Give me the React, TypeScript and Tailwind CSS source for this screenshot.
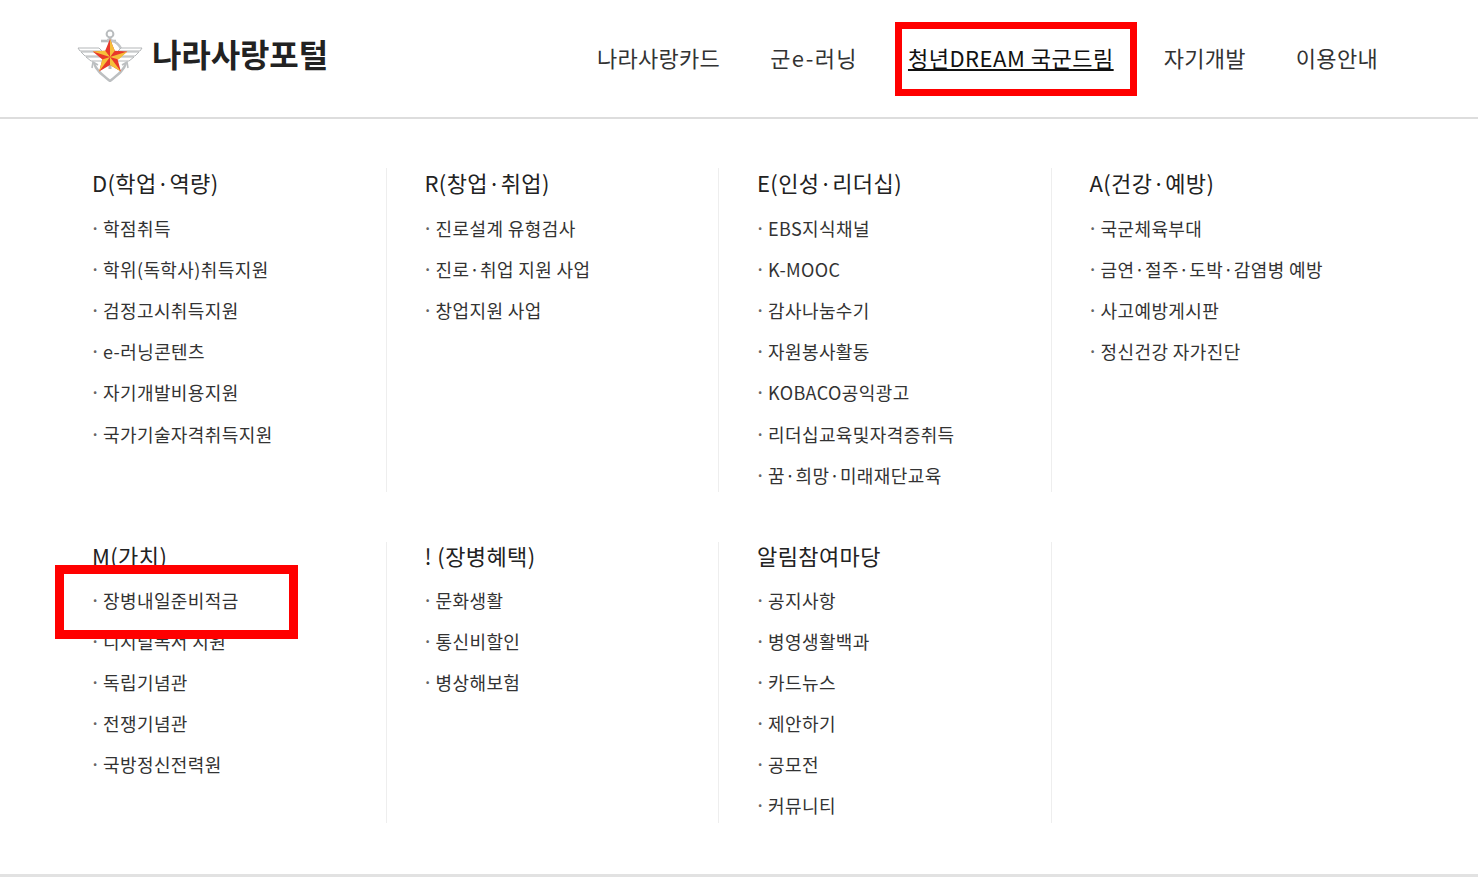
const nav = ['나라사랑카드', '군e-러닝', '청년DREAM 국군드림', '자기개발', '이용안내']

const topGroups = [
  {
    title: 'D(학업·역량)',
    items: ['학점취득', '학위(독학사)취득지원', '검정고시취득지원', 'e-러닝콘텐츠', '자기개발비용지원', '국가기술자격취득지원'],
  },
  { title: 'R(창업·취업)', items: ['진로설계 유형검사', '진로·취업 지원 사업', '창업지원 사업'] },
  {
    title: 'E(인성·리더십)',
    items: ['EBS지식채널', 'K-MOOC', '감사나눔수기', '자원봉사활동', 'KOBACO공익광고', '리더십교육및자격증취득', '꿈·희망·미래재단교육'],
  },
  { title: 'A(건강·예방)', items: ['국군체육부대', '금연·절주·도박·감염병 예방', '사고예방게시판', '정신건강 자가진단'] },
]

const bottomGroups = [
  { title: 'M(가치)', items: ['장병내일준비적금', '디지털독서 지원', '독립기념관', '전쟁기념관', '국방정신전력원'] },
  { title: '! (장병혜택)', items: ['문화생활', '통신비할인', '병상해보험'] },
  { title: '알림참여마당', items: ['공지사항', '병영생활백과', '카드뉴스', '제안하기', '공모전', '커뮤니티'] },
  { title: '', items: [] as string[] },
]

function Emblem() {
  return (
    <svg viewBox="0 0 66 54" className="w-[66px] h-[54px] shrink-0" fill="none">
      <circle cx="33" cy="6" r="3.4" stroke="#b9bcbe" strokeWidth="2" />
      <path d="M33 9v32" stroke="#b9bcbe" strokeWidth="3" />
      <path d="M24 13h15" stroke="#b9bcbe" strokeWidth="2.6" />
      <path d="M30 12c8 0 14 5 15 13" stroke="#c4c6c8" strokeWidth="2.4" />
      {/* wings */}
      <path d="M1 20h21l3 3H3z" fill="#fff" stroke="#b4b7b9" strokeWidth="1" />
      <path d="M65 20H44l-3 3h22z" fill="#fff" stroke="#b4b7b9" strokeWidth="1" />
      <path d="M4 24h20l2 4H8z" fill="#fff" stroke="#b4b7b9" strokeWidth="1" />
      <path d="M62 24H42l-2 4h18z" fill="#fff" stroke="#b4b7b9" strokeWidth="1" />
      <path d="M9 29h18l2 4H14z" fill="#fff" stroke="#b4b7b9" strokeWidth="1" />
      <path d="M57 29H39l-2 4h15z" fill="#fff" stroke="#b4b7b9" strokeWidth="1" />
      {/* anchor arms */}
      <path d="M17 35c2 8 10 13 16 18 6-5 14-10 16-18" stroke="#bcbfc1" strokeWidth="2.4" />
      <path d="M21 37l-5-3-1 6M45 37l5-3 1 6" stroke="#bcbfc1" strokeWidth="1.6" />
      {/* star */}
      <path d="M33 11l4.800 11.700 12.500.7-9.700 8 3.300 12.100L33 37l-10.900 6.500 3.300-12.100-9.700-8 12.500-.7z" fill="#e8382a" />
      <path d="M33 11v18l4.800-6.300zM50.300 23.400 33 29l8.600 2.400zM43.900 43.500 33 29v8zM22.100 43.500 33 29l-7.600 2.400zM15.700 23.400 33 29l-4.800-6.300z" fill="#f6bf3a" />
    </svg>
  )
}

function Group({ title, items, last, lower }: { title: string; items: string[]; last: boolean; lower?: boolean }) {
  return (
    <div className={`pl-[38px] ${last ? '' : 'border-r border-[#eeeeee]'}`}>
      <h3 className={`${lower ? '-mt-[3px]' : '-mt-[2px]'} text-[22px] leading-[32px] tracking-[0.4px] text-[#222222]`}>{title}</h3>
      <ul className={`${lower ? 'mt-[9px]' : 'mt-[10px]'} flex flex-col`}>
        {items.map(item => (
          <li key={item} className={`${lower ? 'h-[41px]' : 'h-[41.1px]'} flex items-center text-[18px] tracking-[0.4px] text-[#333333]`}>
            <span className="w-[11px] -ml-[1px] mr-[1px] text-[14px] font-bold text-[#666666]">·</span>
            {item}
          </li>
        ))}
      </ul>
    </div>
  )
}

export default function App() {
  return (
    <div className="relative w-[1478px] h-[877px] overflow-hidden bg-white font-['Noto_Sans_CJK_KR','Noto_Sans',sans-serif]">
      <header className="h-[119px] flex items-center border-b-2 border-[#dddddd] pl-[77px] pr-[100px]">
        <a className="flex items-center gap-[9px] -mt-[8px]">
          <Emblem />
          <span className="-mt-[3px] text-[32px] font-bold tracking-[-0.1px] text-[#222222]">나라사랑포털</span>
        </a>
        <nav className="ml-auto -mt-[2px] flex items-center gap-[50px] text-[22px] tracking-[0.3px] text-[#333333]">
          <a>{nav[0]}</a>
          <a className="tracking-[1.4px]">{nav[1]}</a>
          <a className="tracking-[0.5px] underline underline-offset-2 text-[#111111]">{nav[2]}</a>
          <a>{nav[3]}</a>
          <a>{nav[4]}</a>
        </nav>
      </header>

      <main className="pl-[54px] w-[1384px]">
        <section className="grid grid-cols-4 grid-rows-[324px] mt-[49px]">
          {topGroups.map((g, i) => (
            <Group key={g.title} title={g.title} items={g.items} last={i === 3} />
          ))}
        </section>
        <section className="grid grid-cols-4 grid-rows-[281px] mt-[50px]">
          {bottomGroups.map((g, i) => (
            <Group key={i} title={g.title} items={g.items} last={i === 3} lower />
          ))}
        </section>
      </main>

      <div className="absolute left-0 right-0 bottom-0 h-[3px] bg-[#e2e2e2]" />

      {/* annotation boxes drawn on top of the screenshot */}
      <div className="absolute left-[895px] top-[22px] w-[242px] h-[74px] border-[7px] border-[#ff0000]" />
      <div className="absolute left-[55px] top-[565px] w-[243px] h-[74px] border-[9px] border-[#ff0000]" />
    </div>
  )
}
